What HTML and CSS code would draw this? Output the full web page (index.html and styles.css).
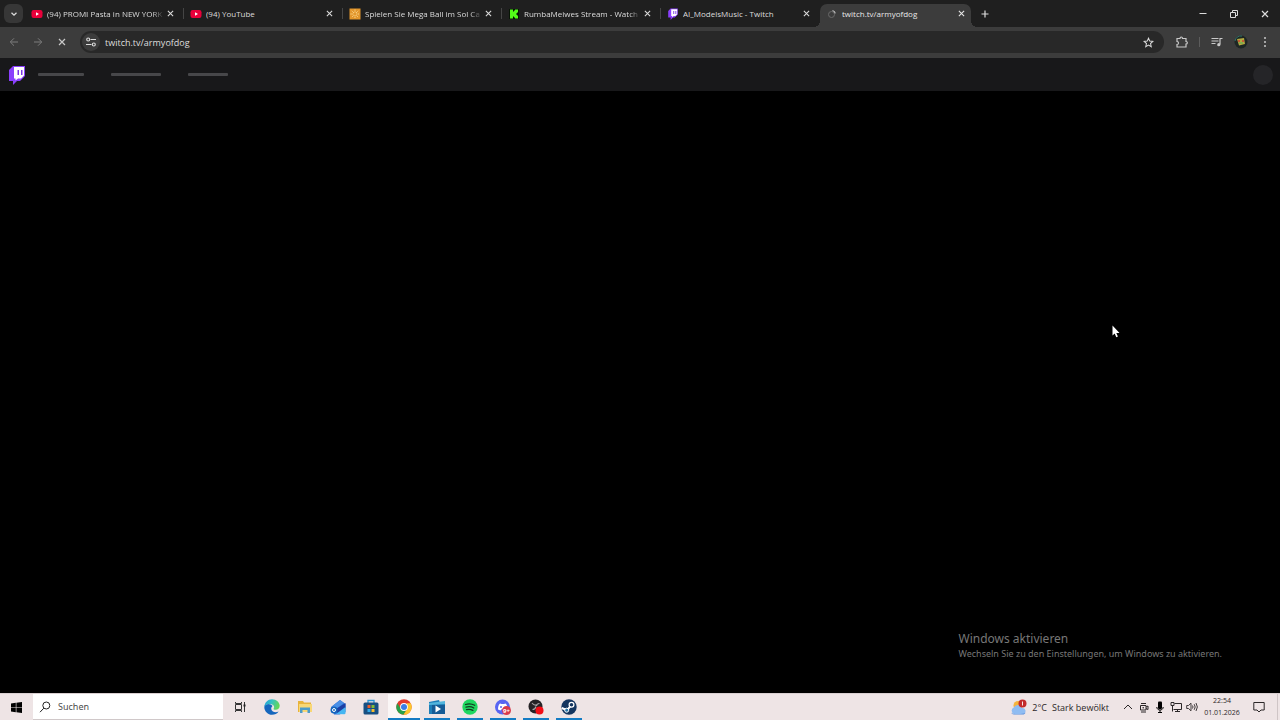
FILE: index.html
```html
<!DOCTYPE html>
<html lang="de">
<head>
  <meta charset="utf-8" />
  <title>twitch.tv/armyofdog</title>
  <link rel="stylesheet" href="styles.css">
</head>
<body>
<svg class="sprite" aria-hidden="true">
  <symbol id="i-close" viewBox="0 0 8 8"><path d="M1 1l6 6M7 1L1 7" fill="none" stroke="currentColor" stroke-width="1.2"/></symbol>
  <symbol id="i-youtube" viewBox="0 0 12 12"><rect x="0.5" y="2" width="11" height="8" rx="2.2" fill="#e8003a"/><path d="M5 4.3v3.4L8 6z" fill="#fff"/></symbol>
  <symbol id="i-twitch" viewBox="0 0 18 20"><path d="M5 1h12v10l-5 5H9l-4 4v-4H1V5z" fill="#8a3ffc"/><path d="M6 2h10v8.500l-3 3h-3l-2.500 2v-2H6z" fill="#fff"/><path d="M9.500 5h1.500v5H9.500zM13 5h1.500v5H13z" fill="#7a35e6"/></symbol>
</svg>

<header class="tabstrip">
  <button class="tab-search" aria-label="Tabs durchsuchen">
    <svg width="8" height="8" viewBox="0 0 8 8"><path d="M1.500 2.800L4 5.200l2.500-2.400" fill="none" stroke="currentColor" stroke-width="1.300"/></svg>
  </button>
  <ul class="tabs">
    <li class="tab">
      <svg class="favicon"><use href="#i-youtube"/></svg>
      <button class="tab-title fade">(94) PROMI Pasta in NEW YORK</button>
      <button class="tab-close" aria-label="Schließen"><svg><use href="#i-close"/></svg></button>
    </li>
    <li class="tab">
      <svg class="favicon"><use href="#i-youtube"/></svg>
      <button class="tab-title">(94) YouTube</button>
      <button class="tab-close" aria-label="Schließen"><svg><use href="#i-close"/></svg></button>
    </li>
    <li class="tab">
      <svg class="favicon" viewBox="0 0 12 12"><rect x="0.500" y="0.500" width="11" height="11" fill="#e3962b"/><path d="M6 1.500v9M1.500 6h9M2.800 2.800l6.400 6.400M9.200 2.800L2.800 9.200" stroke="#ffdf9b" stroke-width="0.900" stroke-dasharray="1.200 0.600"/><circle cx="6" cy="6" r="1.300" fill="#e3962b"/></svg>
      <button class="tab-title fade">Spielen Sie Mega Ball im Sol Ca</button>
      <button class="tab-close" aria-label="Schließen"><svg><use href="#i-close"/></svg></button>
    </li>
    <li class="tab">
      <svg class="favicon" viewBox="0 0 12 12"><rect x="1" y="1" width="10" height="10" fill="#061504"/><path d="M2 1.500h3v2h1v-1h1v-1h3v3H9v1H8v1h1v1h1v3H7v-1H6v-1H5v2H2z" fill="#53fc18"/></svg>
      <button class="tab-title fade">RumbaMeiwes Stream - Watch</button>
      <button class="tab-close" aria-label="Schließen"><svg><use href="#i-close"/></svg></button>
    </li>
    <li class="tab">
      <svg class="favicon"><use href="#i-twitch"/></svg>
      <button class="tab-title">AI_ModelsMusic - Twitch</button>
      <button class="tab-close" aria-label="Schließen"><svg><use href="#i-close"/></svg></button>
    </li>
    <li class="tab active">
      <svg class="favicon" viewBox="0 0 12 12"><circle cx="5.500" cy="6.500" r="3" fill="none" stroke="#6a6a6a"/><path d="M6.500 2.500a4 4 0 0 1 2.800 2.800" fill="none" stroke="#c4c4c4" stroke-width="1.200"/></svg>
      <button class="tab-title">twitch.tv/armyofdog</button>
      <button class="tab-close" aria-label="Schließen"><svg><use href="#i-close"/></svg></button>
    </li>
  </ul>
  <button class="new-tab" aria-label="Neuer Tab">
    <svg width="8" height="8" viewBox="0 0 8 8"><path d="M4 0.500v7M0.500 4h7" stroke="currentColor" stroke-width="1.200"/></svg>
  </button>
  <div class="window-controls">
    <button aria-label="Minimieren"><svg width="8" height="8" viewBox="0 0 8 8"><path d="M0.500 3.500h7" stroke="currentColor"/></svg></button>
    <button aria-label="Verkleinern"><svg width="8" height="8" viewBox="0 0 8 8"><path d="M0.500 2.500h5v5h-5zM2.500 2.500v-2h5v5h-2" fill="none" stroke="currentColor"/></svg></button>
    <button aria-label="Fenster schließen"><svg width="8" height="8"><use href="#i-close"/></svg></button>
  </div>
</header>

<nav class="toolbar">
  <button class="tool dim" aria-label="Zurück"><svg width="10" height="10" viewBox="0 0 10 10"><path d="M9 5H1.500M5 1.300L1.300 5 5 8.700" fill="none" stroke="currentColor"/></svg></button>
  <button class="tool dim" aria-label="Vor"><svg width="10" height="10" viewBox="0 0 10 10"><path d="M1 5h7.500M5 1.300L8.700 5 5 8.700" fill="none" stroke="currentColor"/></svg></button>
  <button class="tool" aria-label="Laden abbrechen"><svg width="8" height="8"><use href="#i-close"/></svg></button>
  <div class="omnibox">
    <button class="site-info" aria-label="Websiteinformationen"><svg width="10" height="10" viewBox="0 0 10 10"><g fill="none" stroke="currentColor" stroke-width="1.100"><path d="M4.500 2.500H10M0 7.500h5.500"/><circle cx="2.200" cy="2.500" r="1.500"/><circle cx="7.800" cy="7.500" r="1.500"/></g></svg></button>
    <input class="address" type="text" value="twitch.tv/armyofdog" aria-label="Adresse" />
    <button class="star" aria-label="Lesezeichen"><svg width="11" height="11" viewBox="0 0 12 12"><path d="M6 1.300l1.400 3.200 3.400.3-2.600 2.300.8 3.400-3-1.800-3 1.800.8-3.400L1.200 4.800l3.400-.3z" fill="none" stroke="currentColor" stroke-width="1.100"/></svg></button>
  </div>
  <div class="extensions">
    <button class="tool" aria-label="Erweiterungen"><svg width="12" height="12" viewBox="0 0 12 12"><path d="M1 2.500h3c0-2 2.500-2 2.500 0H10V5.500c1.800 0 1.800 2.500 0 2.500v3H1V8.500c2 0 2-3 0-3z" fill="none" stroke="currentColor" stroke-width="1.200"/></svg></button>
    <span class="divider"></span>
    <button class="tool" aria-label="Mediensteuerung"><svg width="12" height="12" viewBox="0 0 12 12"><path d="M0.500 2.500h7M0.500 5h7M0.500 7.500h4" stroke="currentColor" stroke-width="1.100"/><path d="M9 8.500V2.500h2.500" fill="none" stroke="currentColor" stroke-width="1.200"/><circle cx="7.800" cy="8.700" r="1.600" fill="currentColor"/></svg></button>
    <button class="tool" aria-label="Profil"><svg width="14" height="14" viewBox="0 0 14 14"><circle cx="7" cy="7" r="6.500" fill="#1d2624"/><path d="M1 6a6 6 0 0 1 7-5" fill="none" stroke="#2f7068"/><path d="M3 4l7-1 1 6-6 1.500z" fill="#b3a83f"/><path d="M4 5h2v2H4zM8 5h2v2H8z" fill="#c65a35"/><path d="M5 8h4" stroke="#55b05a"/></svg></button>
    <button class="tool" aria-label="Menü"><svg width="4" height="12" viewBox="0 0 4 12" fill="currentColor"><circle cx="2" cy="2" r="1"/><circle cx="2" cy="6" r="1"/><circle cx="2" cy="10" r="1"/></svg></button>
  </div>
</nav>

<main class="page">
  <div class="site-nav">
    <a class="site-logo" href="#" aria-label="Twitch"><svg width="18" height="20"><use href="#i-twitch"/></svg></a>
    <span class="skeleton"></span>
    <span class="skeleton wide"></span>
    <span class="skeleton narrow"></span>
    <span class="avatar"></span>
  </div>
  <div class="watermark">
    <p class="watermark-title">Windows aktivieren</p>
    <p>Wechseln Sie zu den Einstellungen, um Windows zu aktivieren.</p>
  </div>
  <svg class="cursor" width="8" height="13" viewBox="0 0 8 13"><path d="M0.500 0.500v10l2.200-2 1.600 3.800 1.600-.7-1.600-3.600h3.200z" fill="#fff"/></svg>
</main>

<footer class="taskbar">
  <button class="start" aria-label="Start"><svg width="11" height="11" viewBox="0 0 11 11"><path d="M0 1.500L4.800.8v4.400H0zM5.400.7L11 0v5.200H5.400zM0 5.800h4.800v4.400L0 9.500zM5.400 5.800H11V11l-5.600-.7z" fill="#000"/></svg></button>
  <label class="search">
    <svg width="12" height="12" viewBox="0 0 12 12"><circle cx="7.300" cy="4.500" r="3.500" fill="none" stroke="#222"/><path d="M4.800 7.200L1 11.200" stroke="#222"/></svg>
    <input type="text" placeholder="Suchen" />
  </label>
  <button class="task-view" aria-label="Taskansicht"><svg width="12" height="12" viewBox="0 0 12 12"><path d="M1.500 3.500h6v5h-6zM1.500 1v1.500h6V1M1.500 11V9.500h6V11M10.500 1v10" fill="none" stroke="#333"/><path d="M9.500 3.500h2v2h-2z" fill="#222"/></svg></button>
  <div class="apps">
    <button class="app" aria-label="Edge"><svg viewBox="0 0 16 16"><defs><linearGradient id="edge" x1="0" y1="0" x2="1" y2="0.300"><stop offset="0" stop-color="#1f9bdc"/><stop offset="0.500" stop-color="#35c1c4"/><stop offset="1" stop-color="#62d65b"/></linearGradient></defs><path d="M.3 8C.3 12.500 4 15.800 8 15.800c2.800 0 5.200-1.200 6.600-3.300-3 1.500-6.600.5-7.300-2.200C6.900 8.500 8 7.500 8.500 7 7 4.500.8 4 .3 8z" fill="#1566bd"/><path d="M.3 8C.5 3.500 4 .2 8 .2c4.500 0 7.700 3.300 7.700 6.600 0 2.600-1.900 4-4 4-1.700 0-2.600-.7-1.900-1.600.8-1.200.3-3.200-2.300-3.900C4.500 4.500 1.300 5.500.3 8z" fill="url(#edge)"/></svg></button>
    <button class="app" aria-label="Explorer"><svg viewBox="0 0 16 16"><path d="M1 2h5l1 1.500h7V13H1z" fill="#e8b33b"/><path d="M2 5h13v8H2z" fill="#f8d775"/><path d="M3 8.500h10V14h-2.500v-3h-5v3H3z" fill="#4d9bc9"/></svg></button>
    <button class="app" aria-label="Mail"><svg viewBox="0 0 16 16"><path d="M1 8l9-7 5.500 4v8l-6 2.500H4z" fill="#2a6fd6"/><path d="M2 7.500L10 1l4 3-8.500 6.500z" fill="#4a8fe6"/><path d="M5 10.500L15.500 4v5L8 14.500z" fill="#1d3fa3"/><path d="M6 15l9.500-7v6.500l-1 .8z" fill="#45b6f2"/><circle cx="4" cy="11" r="3.500" fill="#1465bd"/><circle cx="4" cy="11" r="1.500" fill="none" stroke="#fff"/></svg></button>
    <button class="app" aria-label="Store"><svg viewBox="0 0 16 16"><path d="M5 4V1.500h6V4" fill="none" stroke="#2595d6" stroke-width="1.300"/><rect x="0.500" y="3.500" width="15" height="12" rx="1.500" fill="#174f82"/><path d="M4.500 6h3v3h-3z" fill="#e95c2b"/><path d="M8.500 6h3v3h-3z" fill="#83bd37"/><path d="M4.500 10h3v3h-3z" fill="#31a8e8"/><path d="M8.500 10h3v3h-3z" fill="#f8bb2d"/></svg></button>
    <button class="app running current" aria-label="Chrome"><svg viewBox="0 0 16 16"><circle cx="8" cy="8" r="7.700" fill="#e33b2e"/><path d="M1.300 4.200A7.700 7.700 0 0 0 7.500 15.700L11.200 9.900 8 11.500 4.800 9.800z" fill="#27a14a"/><path d="M14.700 4.300A7.700 7.700 0 0 1 7.500 15.700l3.800-6L11 4.300z" fill="#fbc72e"/><circle cx="8" cy="8" r="3.900" fill="#fff"/><circle cx="8" cy="8" r="3" fill="#397de7"/></svg></button>
    <button class="app running" aria-label="Videoeditor"><svg viewBox="0 0 16 16"><path d="M0 3l10-2 1 3h5v11H0z" fill="#1d7eb8"/><path d="M0 4l16-2v3L0 6z" fill="#53b5dd"/><path d="M3 6h13v9H3z" fill="#155b96"/><path d="M6.500 6.500v7l5.500-3.500z" fill="#fff"/></svg></button>
    <button class="app running" aria-label="Spotify"><svg viewBox="0 0 16 16"><circle cx="8" cy="8" r="7.700" fill="#1ed760"/><path d="M3.500 5.500c3-1 6.500-.7 9.200.8M4 8.200c2.600-.8 5.500-.5 7.800.8M4.500 10.700c2.200-.6 4.500-.4 6.400.7" fill="none" stroke="#103c20" stroke-width="1.300" stroke-linecap="round"/></svg></button>
    <button class="app running" aria-label="Discord"><svg viewBox="0 0 16 16"><circle cx="7.500" cy="8" r="7.500" fill="#5865f2"/><path d="M5 4.500l1.500.5h2.500l1.500-.5c1.500 1 2 3.500 2 6l-2.500 1-1-1.200H6.500l-1 1.200-2.500-1c0-2.500.5-5 2-6z" fill="#fff"/><circle cx="6" cy="8" r="1" fill="#5865f2"/><circle cx="11.500" cy="11.500" r="4.500" fill="#d83b4b"/><text x="11.500" y="13.500" class="badge">9+</text></svg></button>
    <button class="app running" aria-label="OBS"><svg viewBox="0 0 16 16"><circle cx="7.500" cy="7.500" r="7" fill="#252326"/><path d="M4 4c1.500 2 3 2.500 4.500 2M11.500 4.500c-2 .2-3 1-3 2.500M4.500 10.500c1.500 0 3-1 3.500-3" fill="none" stroke="#a9a3a6" stroke-width="1.200"/><circle cx="11.500" cy="11.500" r="4" fill="#f20d16"/></svg></button>
    <button class="app running" aria-label="Steam"><svg viewBox="0 0 16 16"><circle cx="8" cy="8" r="7.700" fill="#14355f"/><path d="M.7 9l5.500 2.200 4-5.200" fill="none" stroke="#fff" stroke-width="2"/><circle cx="10.500" cy="5.800" r="2.400" fill="#14355f" stroke="#fff" stroke-width="1.200"/><circle cx="5.700" cy="11.200" r="2" fill="#2b76a8" stroke="#fff"/></svg></button>
  </div>
  <div class="tray">
    <button class="weather">
      <svg width="17" height="17" viewBox="0 0 17 17"><circle cx="8" cy="6.500" r="4.500" fill="#f5b43c"/><path d="M4 15a3.500 3.500 0 0 1-.3-6.500 4.500 4.500 0 0 1 8.300.5A3 3 0 0 1 13 15z" fill="#8fbcf2"/><path d="M1 13.500c1 2 12 2 14.500 0-.5 1.500-1.500 2-2.500 2H4c-1.500 0-2.500-.8-3-2z" fill="#5990df"/><circle cx="12.500" cy="4.500" r="4" fill="#c42b2b"/><path d="M12.500 2.500v4" stroke="#fff" stroke-width=".9"/></svg>
      <span>2°C</span>
      <span>Stark bewölkt</span>
    </button>
    <button class="tray-icon" aria-label="Ausgeblendete Symbole"><svg viewBox="0 0 12 12"><path d="M2 8l4-4 4 4" fill="none" stroke="currentColor"/></svg></button>
    <button class="tray-icon" aria-label="Besprechung"><svg viewBox="0 0 12 12"><path d="M2.500 4.500h5.500v4.500H2.500zM8 6l2-1v3.500L8 7.500M3 2.500h5M3 11h5" fill="none" stroke="currentColor"/><circle cx="5.200" cy="6.700" r=".8" fill="currentColor"/></svg></button>
    <button class="tray-icon" aria-label="Mikrofon"><svg viewBox="0 0 12 12"><rect x="4" y="0.500" width="4" height="7.500" rx="1" fill="#000"/><path d="M2.800 6c0 4 6.400 4 6.400 0M6 9v2.500M4 11.500h4" fill="none" stroke="#000"/></svg></button>
    <button class="tray-icon" aria-label="Netzwerk"><svg viewBox="0 0 12 12"><path d="M4.500 2.500h7v6h-8M1 1.500h3v3H1zM2.500 4.500v6M5 10.500h5M7.500 8.500v2" fill="none" stroke="currentColor"/></svg></button>
    <button class="tray-icon" aria-label="Lautstärke"><svg viewBox="0 0 12 12"><path d="M.7 4.500h1.800L5 2.200v7.600L2.500 7.500H.7zM6.500 4.500q1 1.500 0 3M8.200 3.200q2 2.800 0 5.600M10 2q2.700 4 0 8" fill="none" stroke="currentColor" stroke-width=".9"/></svg></button>
    <time class="clock"><span>22:54</span><span>01.01.2026</span></time>
    <button class="notifications" aria-label="Info-Center"><svg width="12" height="12" viewBox="0 0 12 12"><path d="M.8 1.500h10.400v7.500H8L6 11 4 9H.8z" fill="none" stroke="currentColor"/></svg></button>
  </div>
</footer>
</body>
</html>
```

FILE: styles.css
```css
* {
  box-sizing: border-box;
}
body {
  margin: 0;
  height: 100vh;
  display: flex;
  flex-direction: column;
  overflow: hidden;
  background: #000;
  font-family: "Open Sans", "Noto Sans", sans-serif;
  font-size: 9px;
  color: #dcdcdc;
}
button,
input {
  margin: 0;
  padding: 0;
  border: 0;
  background: none;
  color: inherit;
  font: inherit;
  outline: none;
}
button {
  display: flex;
  align-items: center;
  justify-content: center;
  flex-shrink: 0;
}
svg {
  display: block;
  flex-shrink: 0;
}
.sprite {
  position: absolute;
  width: 0;
  height: 0;
}

/* Tab strip */
.tabstrip {
  display: flex;
  align-items: center;
  flex-shrink: 0;
  height: 27px;
  padding-left: 4px;
  background: #1f1f1f;
}
.tab-search {
  width: 19px;
  height: 19px;
  border-radius: 6px;
  background: #373737;
}
.tabs {
  display: flex;
  flex: 1;
  align-self: stretch;
  align-items: flex-end;
  min-width: 0;
  max-width: 948px;
  margin: 0;
  padding: 0 0 0 2px;
  list-style: none;
}
.tab {
  position: relative;
  display: flex;
  align-items: center;
  flex: 0 1 151px;
  min-width: 0;
  height: 23px;
  margin-right: 8px;
  padding: 0 0 4px 6px;
  font-size: 8px;
}
.tab:last-child {
  margin-right: 0;
}
.tab::after {
  content: "";
  position: absolute;
  right: -8px;
  top: 4px;
  width: 1px;
  height: 11px;
  background: #454545;
}
.tab.active {
  padding-right: 4px;
  border-radius: 7px 7px 0 0;
  background: #3c3c3c;
  color: #e8e8e8;
}
/* hide the separator next to the active tab */
.tab:nth-last-child(2)::after {
  display: none;
}
.tab.active::before,
.tab.active::after {
  content: "";
  position: absolute;
  top: auto;
  bottom: 0;
  width: 6px;
  height: 6px;
}
.tab.active::before {
  left: -6px;
  background: radial-gradient(circle at 0 0, #1f1f1f 6px, #3c3c3c 6px);
}
.tab.active::after {
  right: -6px;
  background: radial-gradient(circle at 100% 0, #1f1f1f 6px, #3c3c3c 6px);
}
.favicon {
  width: 12px;
  height: 12px;
  margin-right: 4px;
}
.tab-title {
  flex: 1 1 0;
  min-width: 0;
  justify-content: flex-start;
  overflow: hidden;
  white-space: nowrap;
}
.tab-title.fade {
  -webkit-mask-image: linear-gradient(to right, #000 90%, transparent);
  mask-image: linear-gradient(to right, #000 90%, transparent);
}
.tab-close {
  width: 12px;
  height: 12px;
}
.tab-close svg {
  width: 7px;
  height: 7px;
}
.new-tab {
  width: 27px;
  height: 19px;
}
.window-controls {
  display: flex;
  align-self: stretch;
  margin-left: auto;
}
.window-controls button {
  width: 31px;
}

/* Toolbar */
.toolbar {
  display: flex;
  align-items: center;
  flex-shrink: 0;
  height: 31px;
  padding: 0 3px 1px 2px;
  background: #3c3c3c;
}
.tool {
  width: 24px;
  height: 22px;
  color: #c9c9c9;
}
.dim {
  color: #7c7c7c;
}
.omnibox {
  display: flex;
  align-items: center;
  flex: 1;
  height: 22px;
  margin: 0 6px;
  padding: 0 6px 0 2px;
  border-radius: 11px;
  background: #282828;
}
.site-info {
  width: 18px;
  height: 18px;
  border-radius: 50%;
  background: #3c3c3c;
}
.address {
  flex: 1;
  min-width: 0;
  margin-left: 5px;
  color: #dedede;
}
.star {
  width: 20px;
  height: 18px;
}
.extensions {
  display: flex;
  align-items: center;
}
.divider {
  width: 1px;
  height: 10px;
  margin: 0 5px;
  background: #5c5c5c;
}

/* Page */
.page {
  position: relative;
  flex: 1;
  min-height: 0;
}
.site-nav {
  display: flex;
  align-items: center;
  gap: 27px;
  height: 33px;
  padding: 0 7px 0 8px;
  background: #18181a;
}
.site-logo {
  margin-right: -15px;
}
.skeleton {
  width: 46px;
  height: 3px;
  border-radius: 1px;
  background: #47474a;
}
.skeleton.wide {
  width: 50px;
}
.skeleton.narrow {
  width: 40px;
}
.avatar {
  width: 20px;
  height: 20px;
  margin-left: auto;
  border-radius: 50%;
  background: #252528;
}
.watermark {
  position: absolute;
  right: 58px;
  bottom: 32px;
  font-family: "Noto Sans", sans-serif;
  font-size: 9px;
  line-height: 14px;
  color: #777;
}
.watermark p {
  margin: 0;
}
.watermark .watermark-title {
  font-size: 12px;
  line-height: 17px;
}
.cursor {
  position: absolute;
  left: 1112px;
  top: 267px;
}

/* Taskbar */
.taskbar {
  display: flex;
  flex-shrink: 0;
  height: 27px;
  border-top: 1px solid #d9cfd0;
  background: #eee4e5;
  color: #2b2728;
}
.start {
  width: 33px;
}
.search {
  display: flex;
  align-items: center;
  gap: 7px;
  width: 190px;
  padding-left: 6px;
  border-bottom: 1px solid #d0c8c9;
  background: #fff;
}
.search input {
  flex: 1;
  min-width: 0;
  font-family: "Noto Sans", sans-serif;
}
.search input::placeholder {
  color: #4c4c4c;
  opacity: 1;
}
.task-view {
  width: 33px;
}
.apps {
  display: flex;
  gap: 1px;
}
.app {
  width: 32px;
  position: relative;
}
.app svg {
  width: 16px;
  height: 16px;
}
.app.running::after {
  content: "";
  position: absolute;
  left: 3px;
  right: 3px;
  bottom: 0;
  height: 2px;
  background: #147cc4;
}
.app.current {
  background: #faf6f6;
}
.app.current::after {
  left: 0;
  right: 0;
}
.badge {
  font-size: 6px;
  font-weight: 700;
  fill: #fff;
  text-anchor: middle;
}
.tray {
  display: flex;
  align-items: center;
  margin-left: auto;
  padding-right: 2px;
}
.weather {
  gap: 5px;
  margin-right: 11px;
}
.tray-icon {
  width: 16px;
}
.tray-icon svg {
  width: 12px;
  height: 12px;
}
.clock {
  display: flex;
  flex-direction: column;
  align-items: center;
  width: 38px;
  margin-left: 3px;
  font-size: 7px;
  line-height: 12px;
}
.notifications {
  align-self: stretch;
  width: 37px;
  border-right: 1px solid #cfc5c6;
}
```
